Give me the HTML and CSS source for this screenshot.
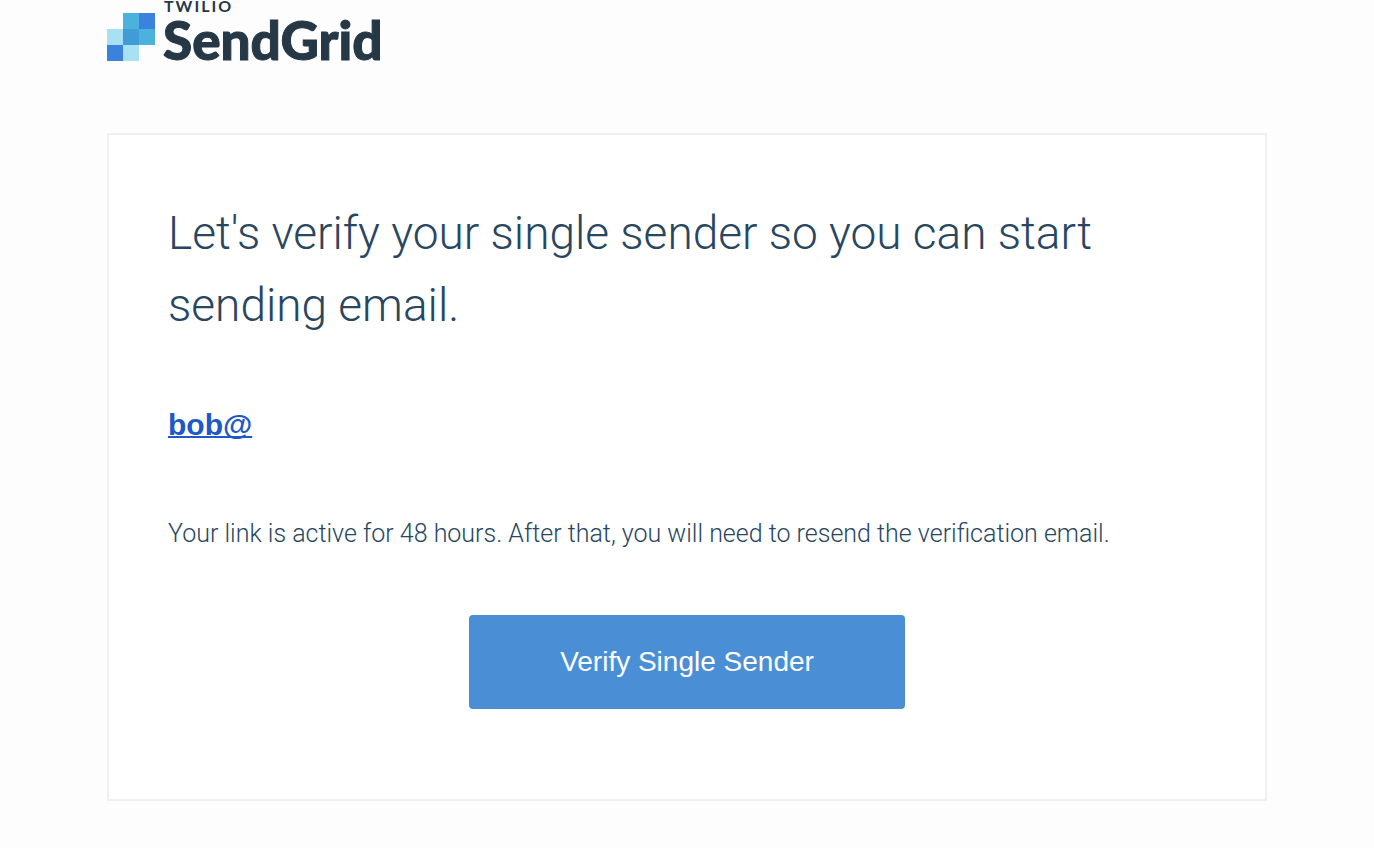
FILE: index.html
```html
<!DOCTYPE html>
<html lang="en">
<head>
<meta charset="utf-8">
<meta name="viewport" content="width=device-width, initial-scale=1">
<title>Verify your single sender</title>
<link rel="stylesheet" href="styles.css">
</head>
<body>
<div class="page">
  <header class="brand">
    <svg class="brand-mark" viewBox="0 0 48 48" aria-hidden="true">
      <rect x="16" y="0" width="16" height="16" fill="#4bb1dd"/>
      <rect x="32" y="0" width="16" height="16" fill="#3a82de"/>
      <rect x="0" y="16" width="16" height="16" fill="#a8e1f3"/>
      <rect x="16" y="16" width="16" height="16" fill="#409bd6"/>
      <rect x="32" y="16" width="16" height="16" fill="#4bb1dd"/>
      <rect x="0" y="32" width="16" height="16" fill="#3a82de"/>
      <rect x="16" y="32" width="16" height="16" fill="#a8e1f3"/>
    </svg>
    <div class="brand-text">
      <span class="brand-parent">TWILIO</span>
      <span class="brand-name">SendGrid</span>
    </div>
  </header>
  <main class="card">
    <h1 class="title">Let's verify your single sender so you can start sending email.</h1>
    <p class="address"><a class="address-link" href="mailto:bob@">bob@</a></p>
    <p class="note">Your link is active for 48 hours. After that, you will need to resend the verification email.</p>
    <a class="button" href="#verify">Verify Single Sender</a>
  </main>
</div>
</body>
</html>
```
FILE: styles.css
```css
* {
  box-sizing: border-box;
}

body {
  margin: 0;
  background: #fdfdfd;
  color: #294661;
  font-family: Roboto, "Liberation Sans", sans-serif;
}

.page {
  max-width: 1160px;
  margin: 0 auto;
  padding-bottom: 47px;
}

.brand {
  display: flex;
  align-items: flex-start;
  gap: 8px;
  color: #263746;
  font-family: Lato, "Open Sans", sans-serif;
}

.brand-mark {
  width: 48px;
  height: 48px;
  margin-top: 13px;
}

.brand-text {
  display: flex;
  flex-direction: column;
}

.brand-parent {
  padding-left: 1px;
  font-size: 16px;
  font-weight: 700;
  line-height: 12px;
  letter-spacing: 2px;
}

.brand-name {
  font-size: 53px;
  font-weight: 900;
  line-height: 56px;
  -webkit-text-stroke: 1px #263746;
}

.card {
  display: flex;
  flex-direction: column;
  margin-top: 65px;
  padding: 62px 59px 90px;
  border: 2px solid #f0f0f0;
  background: #fff;
}

.title {
  margin: 0;
  font-size: 46px;
  font-weight: 300;
  line-height: 72px;
}

.address {
  margin: 60px 0 64px;
  font-family: "Liberation Sans", sans-serif;
  font-size: 30px;
  font-weight: 700;
  line-height: 48px;
}

.address-link {
  color: #2058c8;
  text-decoration-thickness: 2px;
  text-decoration-skip-ink: none;
}

.note {
  margin: 0 0 60px;
  font-size: 25px;
  font-weight: 300;
  line-height: 42px;
}

.button {
  align-self: center;
  padding: 26px 91px;
  border-radius: 4px;
  background: #4a8fd6;
  color: #fff;
  font-family: "Liberation Sans", sans-serif;
  font-size: 28px;
  line-height: 42px;
  text-decoration: none;
}
```
